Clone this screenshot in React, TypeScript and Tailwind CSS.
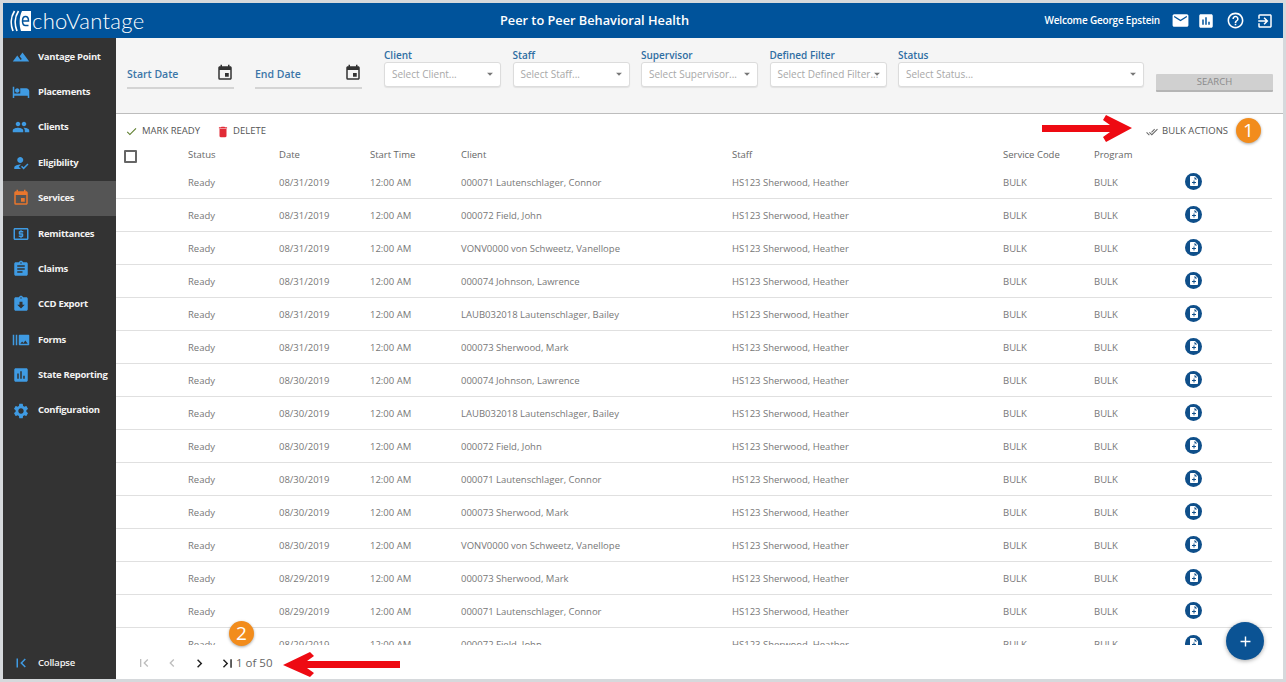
import React from "react";
import {
  MdTerrain, MdHotel, MdPeople, MdHowToReg, MdEvent, MdLocalAtm, MdAssignment, MdAssignmentReturned,
  MdBurstMode, MdAssessment, MdSettings, MdFirstPage, MdLastPage, MdChevronLeft, MdChevronRight,
  MdEmail, MdHelpOutline, MdExitToApp, MdCheck, MdDelete, MdDoneAll, MdNoteAdd, MdAdd, MdArrowDropDown,
} from "react-icons/md";

const nav: [string, React.ComponentType<{ className?: string }>][] = [
  ["Vantage Point", MdTerrain],
  ["Placements", MdHotel],
  ["Clients", MdPeople],
  ["Eligibility", MdHowToReg],
  ["Services", MdEvent],
  ["Remittances", MdLocalAtm],
  ["Claims", MdAssignment],
  ["CCD Export", MdAssignmentReturned],
  ["Forms", MdBurstMode],
  ["State Reporting", MdAssessment],
  ["Configuration", MdSettings],
];

const rows: [string, string][] = [
  ["08/31/2019", "000071 Lautenschlager, Connor"],
  ["08/31/2019", "000072 Field, John"],
  ["08/31/2019", "VONV0000 von Schweetz, Vanellope"],
  ["08/31/2019", "000074 Johnson, Lawrence"],
  ["08/31/2019", "LAUB032018 Lautenschlager, Bailey"],
  ["08/31/2019", "000073 Sherwood, Mark"],
  ["08/30/2019", "000074 Johnson, Lawrence"],
  ["08/30/2019", "LAUB032018 Lautenschlager, Bailey"],
  ["08/30/2019", "000072 Field, John"],
  ["08/30/2019", "000071 Lautenschlager, Connor"],
  ["08/30/2019", "000073 Sherwood, Mark"],
  ["08/30/2019", "VONV0000 von Schweetz, Vanellope"],
  ["08/29/2019", "000073 Sherwood, Mark"],
  ["08/29/2019", "000071 Lautenschlager, Connor"],
  ["08/29/2019", "000072 Field, John"],
];

const grid = "grid grid-cols-[72px_91px_91px_91px_271px_271px_91px_91px_32px]";

function DateField({ label }: { label: string }) {
  return (
    <div className="w-[107px] h-[29px] mt-[22px] pt-[2px] flex items-center justify-between border-b-2 border-[#d4d4d4]">
      <span className="text-[10.5px] font-semibold text-[#3b76a8]">{label}</span>
      <MdEvent className="text-[18px] text-[#333] mb-[3px]" />
    </div>
  );
}

function SelectField({ label, placeholder, w }: { label: string; placeholder: string; w: string }) {
  return (
    <div className={`flex flex-col pt-[9px] ${w}`}>
      <span className="h-[15px] leading-[16px] text-[10px] font-semibold text-[#2f6ea3]">{label}</span>
      <div className="h-[25px] pb-[1px] bg-white border border-[#dcdcdc] rounded-[3px] shadow-[0_1px_1px_rgba(0,0,0,0.08)] flex items-center justify-between pl-[7px] pr-[1px]">
        <span className="text-[10px] text-[#a8a8a8] whitespace-nowrap">{placeholder}</span>
        <MdArrowDropDown className="text-[14px] text-[#777] shrink-0 -ml-[8px] mr-[2px]" />
      </div>
    </div>
  );
}

export default function App() {
  return (
    <div className="relative w-[1286px] h-[682px] overflow-hidden bg-[#d6d9dc] p-[3px] font-['Open_Sans',sans-serif]">
      <div className="w-full h-full flex flex-col bg-white">
        <header className="h-[35px] shrink-0 bg-[#00539b] flex items-center text-white relative">
          <div className="w-[143px] flex items-center pl-[7px] shrink-0">
            <svg width="22" height="22" viewBox="0 0 22 22" className="shrink-0">
              <path d="M4.5 1 C0.5 7 0.5 15 3 21 M8.5 1 C4.5 7 4.5 15 7 21" fill="none" stroke="#fff" strokeWidth="1.7" />
              <path d="M12 1 C9 7 9 15 11 21 H21 V1 Z" fill="#fff" />
              <path d="M12.5 11 H18.5 C18.5 8 17 6.5 15.5 6.5 C13.5 6.5 12.5 8.5 12.5 11 C12.5 13.5 13.5 15.5 15.5 15.5 H18.5" fill="none" stroke="#00539b" strokeWidth="1.5" />
            </svg>
            <span className="text-[22px] font-['Lato'] font-light leading-none tracking-[0.3px] ml-[0px] mt-[1px]">choVantage</span>
          </div>
          <div className="absolute left-[497px] top-[9px] text-[12.75px] font-semibold leading-[17px] whitespace-nowrap">Peer to Peer Behavioral Health</div>
          <div className="ml-auto flex items-center mr-[9px]">
            <span className="text-[10px] font-semibold mr-[11px] tracking-[-0.2px]">Welcome George Epstein</span>
            <MdEmail className="text-[19px] mr-[7px]" />
            <MdAssessment className="text-[18px] mr-[11px]" />
            <MdHelpOutline className="text-[19px] mr-[11px]" />
            <MdExitToApp className="text-[18px]" />
          </div>
        </header>
        <div className="flex-1 flex min-h-0">
          <aside className="w-[113px] shrink-0 bg-[#333333] flex flex-col pt-[1px]">
            {nav.map(([label, Icon]) => {
              const active = label === "Services";
              return (
                <div key={label} className={`h-[35.4px] flex items-center pl-[9px] ${active ? "bg-[#555555]" : ""}`}>
                  <span className="w-[26px] flex shrink-0">
                    <Icon className={`text-[18px] ${active ? "text-[#e8762d]" : "text-[#3f9be3]"}`} />
                  </span>
                  <span className="text-[9.5px] font-bold text-[#f2f2f2] whitespace-nowrap tracking-[-0.3px]">{label}</span>
                </div>
              );
            })}
            <div className="mt-auto h-[34px] pt-[2px] flex items-center pl-[9px]">
              <span className="w-[26px] flex shrink-0">
                <MdFirstPage className="text-[18px] text-[#3f9be3]" />
              </span>
              <span className="text-[9.5px] font-semibold text-[#f2f2f2] tracking-[-0.2px]">Collapse</span>
            </div>
          </aside>
          <main className="flex-1 min-w-0 flex flex-col">
            <section className="h-[76px] shrink-0 bg-[#f5f5f5] border-b border-[#bdbdbd] flex pl-[11px]">
              <DateField label="Start Date" />
              <div className="w-[21px]" />
              <DateField label="End Date" />
              <div className="w-[22px]" />
              <div className="flex gap-[11.5px]">
                <SelectField label="Client" placeholder="Select Client..." w="w-[117px]" />
                <SelectField label="Staff" placeholder="Select Staff..." w="w-[117px]" />
                <SelectField label="Supervisor" placeholder="Select Supervisor..." w="w-[117px]" />
                <SelectField label="Defined Filter" placeholder="Select Defined Filter..." w="w-[117px]" />
                <SelectField label="Status" placeholder="Select Status..." w="w-[246px]" />
              </div>
              <div className="ml-[12px] mt-[36px] w-[117px] h-[18px] bg-[#d0d0d0] border-b-2 border-[#b5b5b5] rounded-[1px] flex items-center justify-center text-[9.5px] text-[#8a8a8a]">SEARCH</div>
            </section>
            <div className="h-[31px] pt-[4px] shrink-0 flex items-center pl-[9px] pr-[55px] text-[9.5px] text-[#555]">
              <MdCheck className="text-[13px] text-[#5f7f2f] mr-[4px]" />
              <span>MARK READY</span>
              <MdDelete className="text-[14px] text-[#e12b36] ml-[16px] mr-[2px]" />
              <span className="ml-[1px]">DELETE</span>
              <span className="ml-auto flex items-center">
                <MdDoneAll className="text-[12px] text-[#666] mr-[4px]" />
                <span>BULK ACTIONS</span>
              </span>
            </div>
            <div className={`${grid} h-[21px] pb-[1px] shrink-0 items-center text-[9.5px] text-[#666] pr-[11px]`}>
              <div className="pl-[8px] flex">
                <span className="w-[13px] h-[13px] border-2 border-[#666] rounded-[1px] mt-[3px]" />
              </div>
              <div>Status</div>
              <div>Date</div>
              <div>Start Time</div>
              <div>Client</div>
              <div>Staff</div>
              <div>Service Code</div>
              <div>Program</div>
              <div />
            </div>
            <div className="flex-1 min-h-0 overflow-hidden pr-[11px]">
              {rows.map(([date, client], i) => (
                <div key={i} className={`${grid} h-[33px] pt-[3px] items-center text-[9.5px] text-[#777] border-b border-[#e0e0e0]`}>
                  <div />
                  <div>Ready</div>
                  <div>{date}</div>
                  <div>12:00 AM</div>
                  <div>{client}</div>
                  <div>HS123 Sherwood, Heather</div>
                  <div>BULK</div>
                  <div>BULK</div>
                  <div className="-mt-[5px]">
                    <span className="w-[17px] h-[17px] rounded-full bg-[#0f4f8a] flex items-center justify-center">
                      <MdNoteAdd className="text-[12px] text-white" />
                    </span>
                  </div>
                </div>
              ))}
            </div>
            <footer className="h-[34px] pt-[2px] shrink-0 bg-white flex items-center pl-[20px] text-[#666]">
              <MdFirstPage className="text-[16px] text-[#bdbdbd]" />
              <MdChevronLeft className="text-[16px] text-[#bdbdbd] ml-[12px]" />
              <MdChevronRight className="text-[17px] text-[#222] ml-[11px]" />
              <MdLastPage className="text-[17px] text-[#222] ml-[11px]" />
              <span className="text-[11.5px] ml-[0px]">1 of 50</span>
            </footer>
          </main>
        </div>
      </div>

      {/* annotations and floating action */}
      <div className="absolute left-[1226px] top-[622px] w-[38px] h-[38px] rounded-full bg-[#0b5394] shadow-[0_1px_4px_rgba(0,0,0,0.35)] flex items-center justify-center">
        <MdAdd className="text-[17px] text-white" />
      </div>
      <div className="absolute left-[1236px] top-[118px] w-[25px] h-[25px] rounded-full bg-[#f28c1c] shadow-[0_1px_3px_rgba(0,0,0,0.35)] flex items-center justify-center text-white text-[19px] leading-none">1</div>
      <div className="absolute left-[229px] top-[621px] w-[25px] h-[25px] rounded-full bg-[#f28c1c] shadow-[0_1px_3px_rgba(0,0,0,0.35)] flex items-center justify-center text-white text-[19px] leading-none">2</div>
      <svg className="absolute left-[1042px] top-[115px]" width="92" height="28" viewBox="0 0 92 28">
        <path d="M0 10 H68 L61 5 L64 0 L90 13 L64 27 L61 22 L68 17 H0 Z" fill="#ee0a12" />
      </svg>
      <svg className="absolute left-[283px] top-[650px]" width="118" height="28" viewBox="0 0 118 28">
        <path d="M117 11 H24 L31 6 L27 2 L0 15 L27 27 L31 23 L24 18 H117 Z" fill="#ee0a12" />
      </svg>
    </div>
  );
}
